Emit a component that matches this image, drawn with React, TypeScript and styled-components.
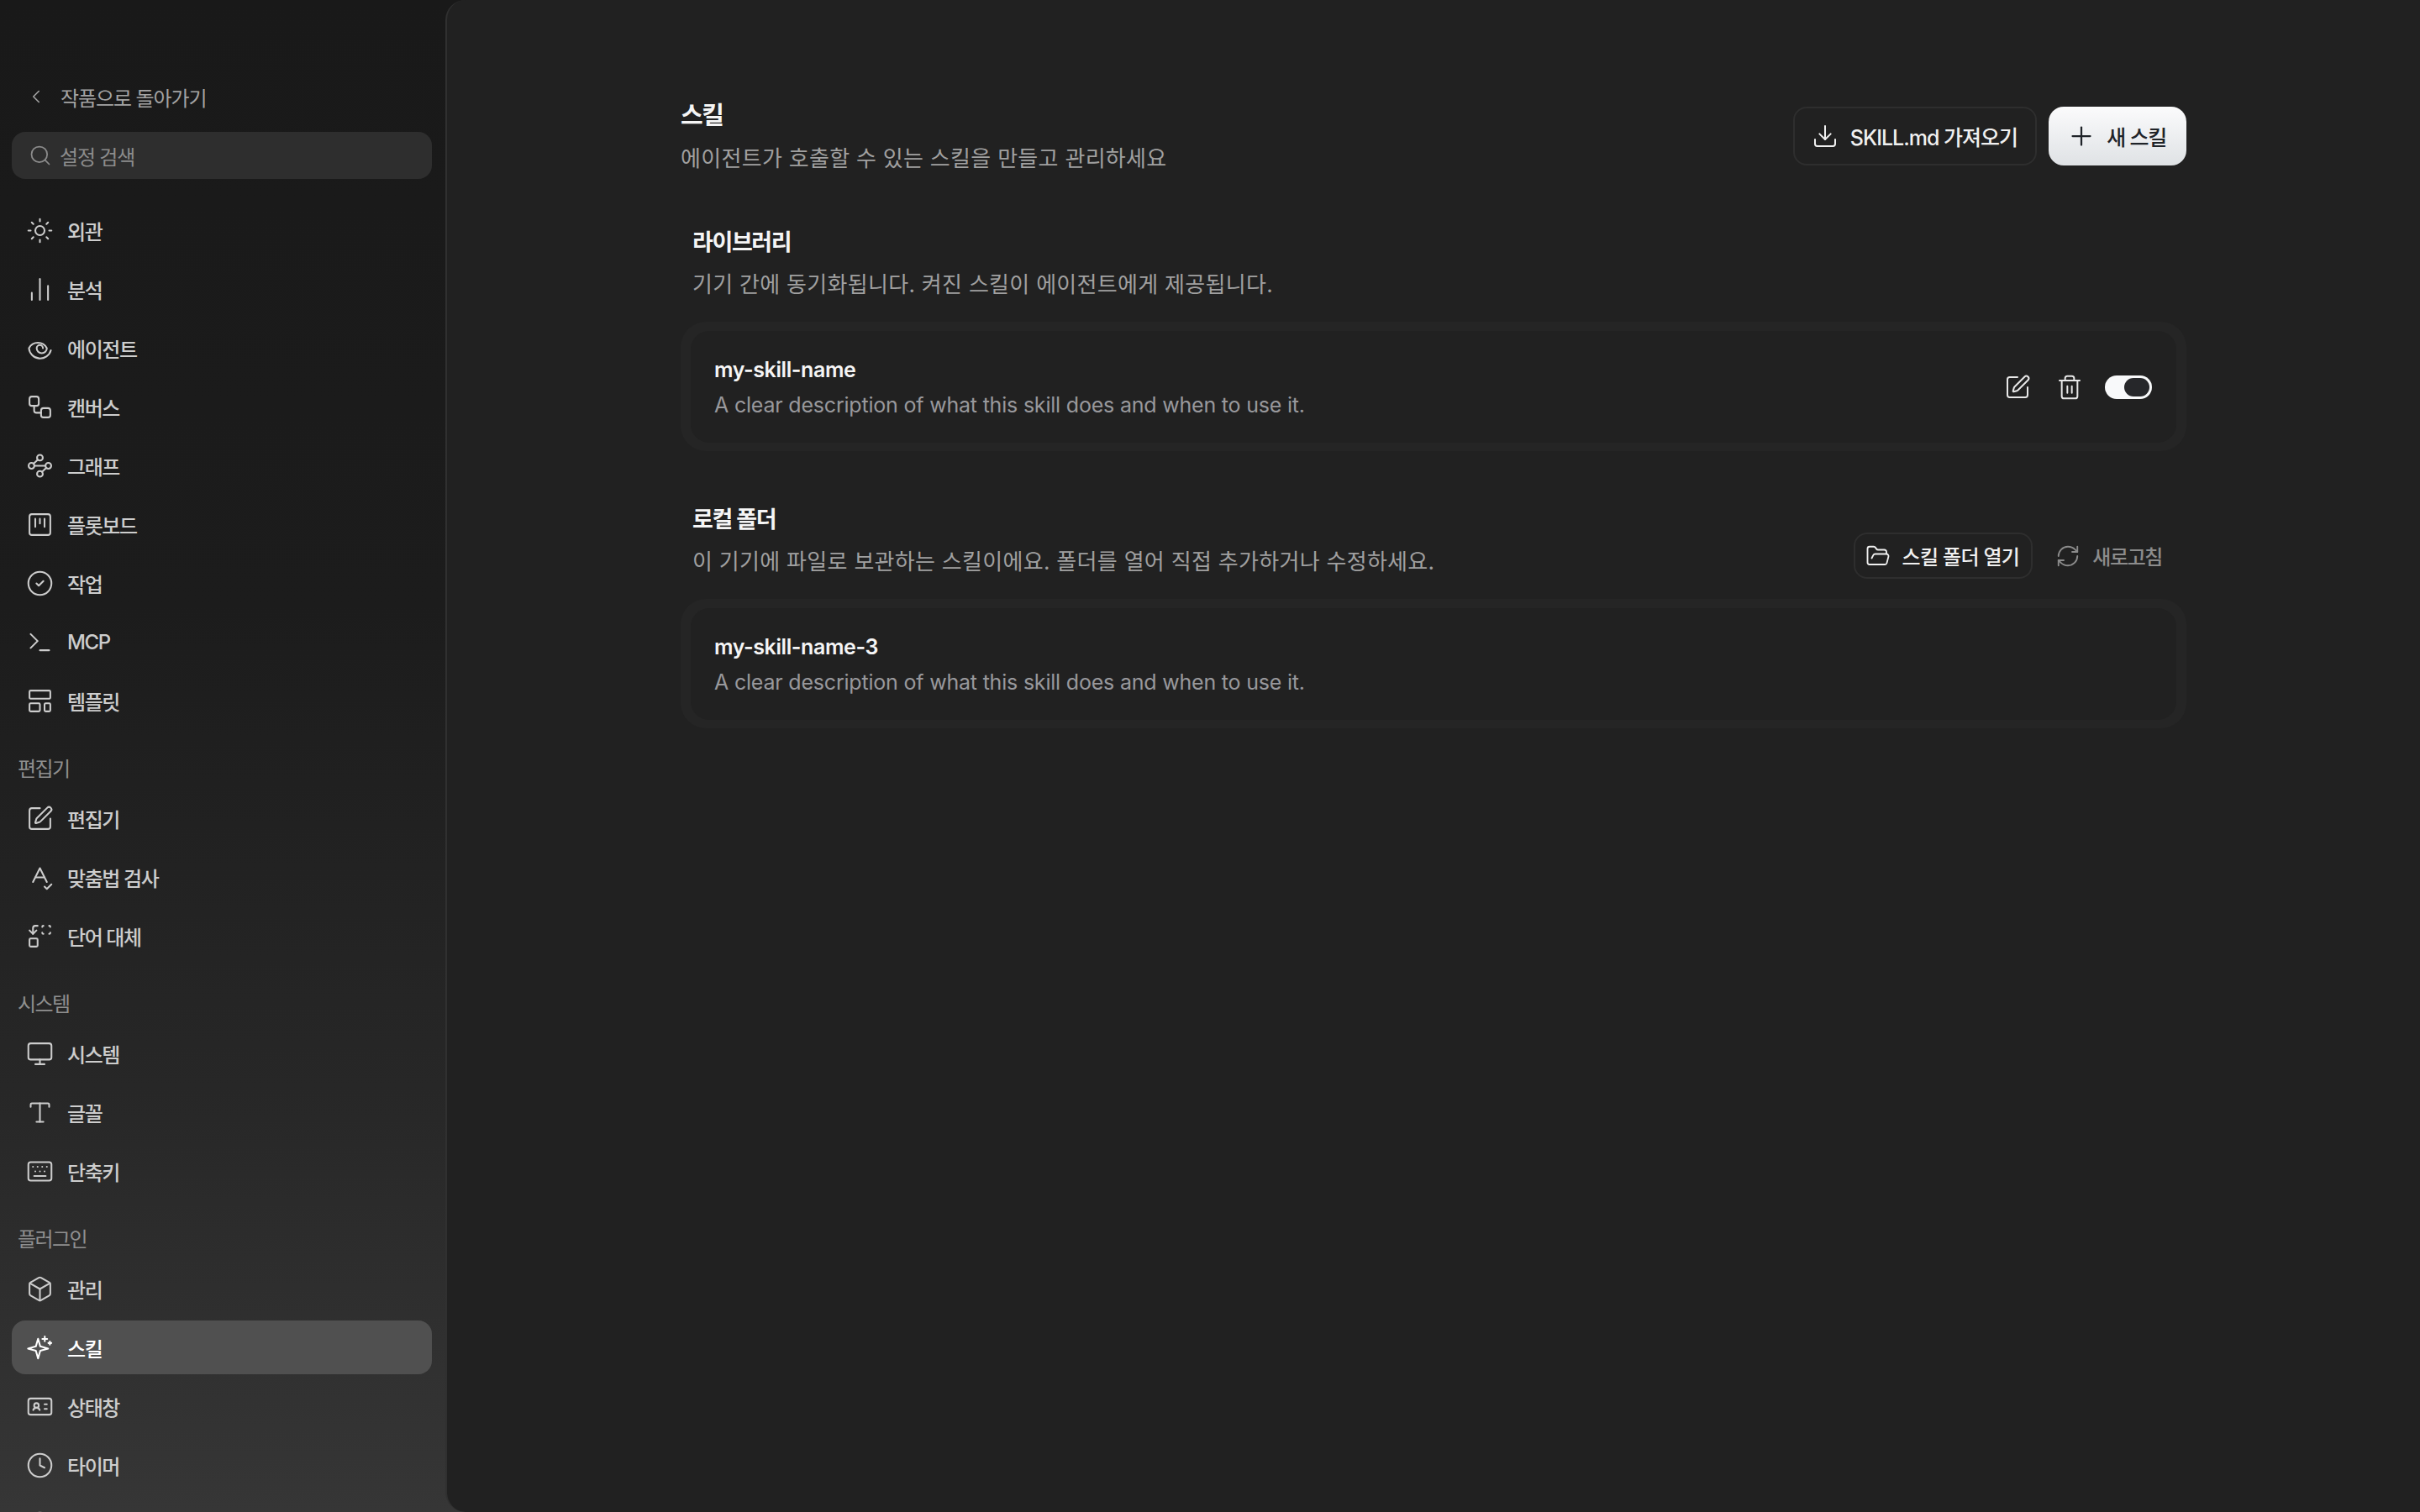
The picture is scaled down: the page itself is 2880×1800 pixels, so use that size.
import {
  Box,
  ChartNoAxesColumn,
  ChevronLeft,
  CircleCheck,
  Clock,
  Download,
  FolderOpen,
  IdCard,
  Info,
  Keyboard,
  LayoutTemplate,
  Monitor,
  Plus,
  RefreshCw,
  Replace,
  Search,
  SpellCheck,
  SquarePen,
  Sun,
  Terminal,
  Trash2,
  Type,
  Workflow,
} from "lucide-react";
import type { ReactNode } from "react";
import styled, { createGlobalStyle } from "styled-components";

const GlobalStyle = createGlobalStyle`
  html, body {
    margin: 0;
    height: 100%;
    background: #212121;
  }
  * {
    box-sizing: border-box;
  }
  #root {
    height: 100%;
  }
`;

const FONT = `Inter, "Noto Sans CJK KR", sans-serif`;

// lucide has no match for these four
function SvgIcon({ size = 33, children }: { size?: number; children: ReactNode }) {
  return (
    <svg
      width={size}
      height={size}
      viewBox="0 0 24 24"
      fill="none"
      stroke="currentColor"
      strokeWidth={1.5}
      strokeLinecap="round"
      strokeLinejoin="round"
    >
      {children}
    </svg>
  );
}

const AgentIcon = () => (
  <SvgIcon>
    <path d="M14.6 12A2.7 2.7 0 0 0 9.2 12A4.4 4.4 0 0 0 18 12A8.75 8.75 0 0 0 2.5 12A9.7 9.7 0 0 0 21.5 13.8" />
  </SvgIcon>
);

const GraphIcon = () => (
  <SvgIcon>
    <circle cx="12" cy="5" r="2.5" />
    <circle cx="4.7" cy="12" r="2.5" />
    <circle cx="19.3" cy="12" r="2.5" />
    <circle cx="12" cy="19" r="2.5" />
    <path d="M7.2 12h9.6" />
    <path d="M10.2 6.8 6.5 10.2" />
    <path d="M13.8 17.2l3.7-3.4" />
  </SvgIcon>
);

const BoardIcon = () => (
  <SvgIcon>
    <rect x="3" y="3" width="18" height="18" rx="2" />
    <path d="M8 7v7" />
    <path d="M12 7v4" />
    <path d="M16 7v7" />
  </SvgIcon>
);

const SkillIcon = () => (
  <SvgIcon>
    <path d="M10.4 4.2 12.3 10.8 19.1 12.7 12.3 14.6 10.4 21.2 8.5 14.6 1.7 12.7 8.5 10.8Z" />
    <path d="M16.2 2.2v4.2" />
    <path d="M14.1 4.3h4.2" />
    <path d="M20.6 6.6v2.6" />
    <path d="M19.3 7.9h2.6" />
  </SvgIcon>
);

type NavEntry = { label: string; icon: ReactNode; active?: boolean };

const icon = { size: 33, strokeWidth: 1.5 };

const topItems: NavEntry[] = [
  { label: "외관", icon: <Sun {...icon} /> },
  { label: "분석", icon: <ChartNoAxesColumn {...icon} /> },
  { label: "에이전트", icon: <AgentIcon /> },
  { label: "캔버스", icon: <Workflow {...icon} /> },
  { label: "그래프", icon: <GraphIcon /> },
  { label: "플롯보드", icon: <BoardIcon /> },
  { label: "작업", icon: <CircleCheck {...icon} /> },
  { label: "MCP", icon: <Terminal {...icon} /> },
  { label: "템플릿", icon: <LayoutTemplate {...icon} /> },
];

const groups: { title: string; items: NavEntry[] }[] = [
  {
    title: "편집기",
    items: [
      { label: "편집기", icon: <SquarePen {...icon} /> },
      { label: "맞춤법 검사", icon: <SpellCheck {...icon} /> },
      { label: "단어 대체", icon: <Replace {...icon} /> },
    ],
  },
  {
    title: "시스템",
    items: [
      { label: "시스템", icon: <Monitor {...icon} /> },
      { label: "글꼴", icon: <Type {...icon} /> },
      { label: "단축키", icon: <Keyboard {...icon} /> },
    ],
  },
  {
    title: "플러그인",
    items: [
      { label: "관리", icon: <Box {...icon} /> },
      { label: "스킬", icon: <SkillIcon />, active: true },
      { label: "상태창", icon: <IdCard {...icon} /> },
      { label: "타이머", icon: <Clock {...icon} /> },
      { label: "정보", icon: <Info {...icon} /> },
    ],
  },
];

function NavList({ items }: { items: NavEntry[] }) {
  return (
    <NavItems>
      {items.map((item) => (
        <NavItem key={item.label} $active={item.active}>
          <NavIcon>{item.icon}</NavIcon>
          <span>{item.label}</span>
        </NavItem>
      ))}
    </NavItems>
  );
}

export default function App() {
  return (
    <>
      <GlobalStyle />
      <Layout>
        <Sidebar>
          <BackLink>
            <ChevronLeft size={26} strokeWidth={1.5} />
            <span>작품으로 돌아가기</span>
          </BackLink>
          <SearchBox>
            <Search size={28} strokeWidth={1.5} />
            <span>설정 검색</span>
          </SearchBox>
          <TopNav>
            <NavList items={topItems} />
          </TopNav>
          {groups.map((group) => (
            <NavGroup key={group.title}>
              <GroupTitle>{group.title}</GroupTitle>
              <NavList items={group.items} />
            </NavGroup>
          ))}
        </Sidebar>
        <Main>
          <Content>
            <PageHeader>
              <div>
                <PageTitle>스킬</PageTitle>
                <PageDesc>에이전트가 호출할 수 있는 스킬을 만들고 관리하세요</PageDesc>
              </div>
              <HeaderActions>
                <OutlineButton>
                  <Download size={32} strokeWidth={1.5} />
                  SKILL.md 가져오기
                </OutlineButton>
                <PrimaryButton>
                  <Plus size={36} strokeWidth={1.5} />새 스킬
                </PrimaryButton>
              </HeaderActions>
            </PageHeader>

            <Section>
              <SectionHeader>
                <SectionText>
                  <SectionTitle>라이브러리</SectionTitle>
                  <SectionDesc>기기 간에 동기화됩니다. 켜진 스킬이 에이전트에게 제공됩니다.</SectionDesc>
                </SectionText>
              </SectionHeader>
              <CardShell>
                <CardBody>
                  <div>
                    <SkillName>my-skill-name</SkillName>
                    <SkillDesc>A clear description of what this skill does and when to use it.</SkillDesc>
                  </div>
                  <CardActions>
                    <IconButton>
                      <SquarePen size={32} strokeWidth={1.5} />
                    </IconButton>
                    <IconButton>
                      <Trash2 size={32} strokeWidth={1.5} />
                    </IconButton>
                    <SwitchTrack>
                      <SwitchThumb />
                    </SwitchTrack>
                  </CardActions>
                </CardBody>
              </CardShell>
            </Section>

            <Section>
              <SectionHeader>
                <SectionText>
                  <SectionTitle>로컬 폴더</SectionTitle>
                  <SectionDesc>
                    이 기기에 파일로 보관하는 스킬이에요. 폴더를 열어 직접 추가하거나 수정하세요.
                  </SectionDesc>
                </SectionText>
                <FolderActions>
                  <FolderButton>
                    <FolderOpen size={30} strokeWidth={1.5} />
                    스킬 폴더 열기
                  </FolderButton>
                  <GhostButton>
                    <RefreshCw size={30} strokeWidth={1.5} />
                    새로고침
                  </GhostButton>
                </FolderActions>
              </SectionHeader>
              <CardShell>
                <CardBody>
                  <div>
                    <SkillName>my-skill-name-3</SkillName>
                    <SkillDesc>A clear description of what this skill does and when to use it.</SkillDesc>
                  </div>
                </CardBody>
              </CardShell>
            </Section>
          </Content>
        </Main>
      </Layout>
    </>
  );
}

const Layout = styled.div`
  display: grid;
  grid-template-columns: 530px 1fr;
  height: 100vh;
  overflow: hidden;
  font-family: ${FONT};
  background: linear-gradient(180deg, #191919 0%, #1c1c1c 40%, #272727 72%, #363636 100%);
`;

// sidebar

const Sidebar = styled.aside`
  display: flex;
  flex-direction: column;
  padding: 99px 16px 0 14px;
  overflow: hidden;
  min-height: 0;
`;

const BackLink = styled.div`
  display: flex;
  align-items: center;
  gap: 16px;
  height: 32px;
  padding-left: 16px;
  color: #a3a3a3;
  font-size: 24px;
  letter-spacing: -1.1px;
`;

const SearchBox = styled.div`
  display: flex;
  align-items: center;
  gap: 9px;
  height: 56px;
  margin-top: 26px;
  padding: 0 20px;
  border-radius: 16px;
  background: #2e2e2e;
  color: #8c8c8c;
  font-size: 24px;
  letter-spacing: -1.2px;
  flex: none;
`;

const TopNav = styled.nav`
  margin-top: 29px;
  flex: none;
`;

const NavItems = styled.div`
  display: flex;
  flex-direction: column;
  gap: 6px;
`;

const NavItem = styled.div<{ $active?: boolean }>`
  display: flex;
  align-items: center;
  gap: 16px;
  height: 64px;
  flex: none;
  padding-left: 17px;
  border-radius: 16px;
  font-size: 24px;
  font-weight: 500;
  letter-spacing: -1.4px;
  color: ${(p) => (p.$active ? "#ffffff" : "#cdcdcd")};
  background: ${(p) => (p.$active ? "#505050" : "transparent")};
`;

const NavIcon = styled.span`
  display: flex;
  width: 33px;
  height: 33px;
  flex: none;
`;

const NavGroup = styled.div`
  margin-top: 35px;
  flex: none;
`;

const GroupTitle = styled.div`
  height: 30px;
  margin-bottom: 11px;
  padding-left: 7px;
  line-height: 30px;
  font-size: 24px;
  letter-spacing: -1.6px;
  color: #8f8f8f;
`;

// main panel

const Main = styled.main`
  min-width: 0;
  border-left: 2px solid rgba(255, 255, 255, 0.07);
  border-radius: 24px 0 0 24px;
  background: #212121;
`;

const Content = styled.div`
  width: 1792px;
  margin: 0 auto;
  padding-top: 116px;
`;

const PageHeader = styled.header`
  display: flex;
  align-items: center;
  justify-content: space-between;
`;

const PageTitle = styled.h1`
  margin: 2px 0 0;
  font-size: 29px;
  line-height: 40px;
  font-weight: 600;
  letter-spacing: -1.4px;
  color: #f5f5f5;
`;

const PageDesc = styled.p`
  margin: 13px 0 0;
  font-size: 26px;
  line-height: 36px;
  letter-spacing: 0.3px;
  color: #a0a0a0;
`;

const HeaderActions = styled.div`
  display: flex;
  gap: 14px;
`;

const OutlineButton = styled.button`
  display: flex;
  align-items: center;
  gap: 14px;
  height: 70px;
  padding: 0 21px 0 20px;
  border: 2px solid #2e2e2e;
  border-radius: 16px;
  background: transparent;
  color: #f0f0f0;
  font-family: ${FONT};
  font-size: 25px;
  font-weight: 500;
  letter-spacing: -1px;
`;

const PrimaryButton = styled.button`
  display: flex;
  align-items: center;
  gap: 12px;
  height: 70px;
  padding: 0 24px 0 21px;
  border: 0;
  border-radius: 18px;
  background: linear-gradient(180deg, #fbfbfc 0%, #dfe2e5 100%);
  color: #1f2328;
  font-family: ${FONT};
  font-size: 25px;
  font-weight: 500;
  letter-spacing: -1.2px;
`;

const Section = styled.section`
  margin-top: 60px;
`;

const SectionHeader = styled.div`
  display: flex;
  align-items: flex-end;
  justify-content: space-between;
  padding: 0 12px 0 14px;
`;

const SectionText = styled.div`
  padding-bottom: 4px;
`;

const SectionTitle = styled.h2`
  margin: 2px 0 0;
  font-size: 27px;
  line-height: 40px;
  font-weight: 600;
  letter-spacing: -1.4px;
  color: #f5f5f5;
`;

const SectionDesc = styled.p`
  margin: 12px 0 0;
  font-size: 26px;
  line-height: 36px;
  letter-spacing: 0.3px;
  color: #a0a0a0;
`;

const FolderActions = styled.div`
  display: flex;
  align-items: center;
  gap: 14px;
  margin-bottom: 2px;
`;

const FolderButton = styled.button`
  display: flex;
  align-items: center;
  gap: 14px;
  height: 55px;
  padding: 0 14px 0 12px;
  border: 2px solid #2e2e2e;
  border-radius: 16px;
  background: transparent;
  color: #f0f0f0;
  font-family: ${FONT};
  font-size: 24px;
  font-weight: 500;
  letter-spacing: -0.7px;
`;

const GhostButton = styled.button`
  display: flex;
  align-items: center;
  gap: 14px;
  height: 55px;
  padding: 0 17px 0 13px;
  border: 0;
  background: transparent;
  color: #8c8c8c;
  font-family: ${FONT};
  font-size: 24px;
  font-weight: 500;
  letter-spacing: -1.4px;
`;

const CardShell = styled.div`
  margin-top: 22px;
  padding: 11px 12px 10px 12px;
  border-radius: 30px;
  background: #252525;
`;

const CardBody = styled.div`
  display: flex;
  align-items: center;
  justify-content: space-between;
  height: 133px;
  padding: 0 29px 0 28px;
  border-radius: 22px;
  background: #212121;
`;

const SkillName = styled.div`
  font-size: 25px;
  line-height: 34px;
  font-weight: 600;
  letter-spacing: -0.4px;
  color: #f5f5f5;
`;

const SkillDesc = styled.div`
  margin-top: 8px;
  font-size: 25px;
  line-height: 34px;
  letter-spacing: -0.2px;
  color: #98989c;
`;

const CardActions = styled.div`
  display: flex;
  align-items: center;
  gap: 30px;
  color: #e8e8e8;
`;

const IconButton = styled.span`
  display: flex;
`;

const SwitchTrack = styled.div`
  display: flex;
  align-items: center;
  justify-content: flex-end;
  width: 56px;
  height: 28px;
  margin-left: -4px;
  padding: 3px;
  border-radius: 14px;
  background: #f8f9fa;
`;

const SwitchThumb = styled.div`
  width: 30px;
  height: 22px;
  border-radius: 11px;
  background: #26272a;
`;
